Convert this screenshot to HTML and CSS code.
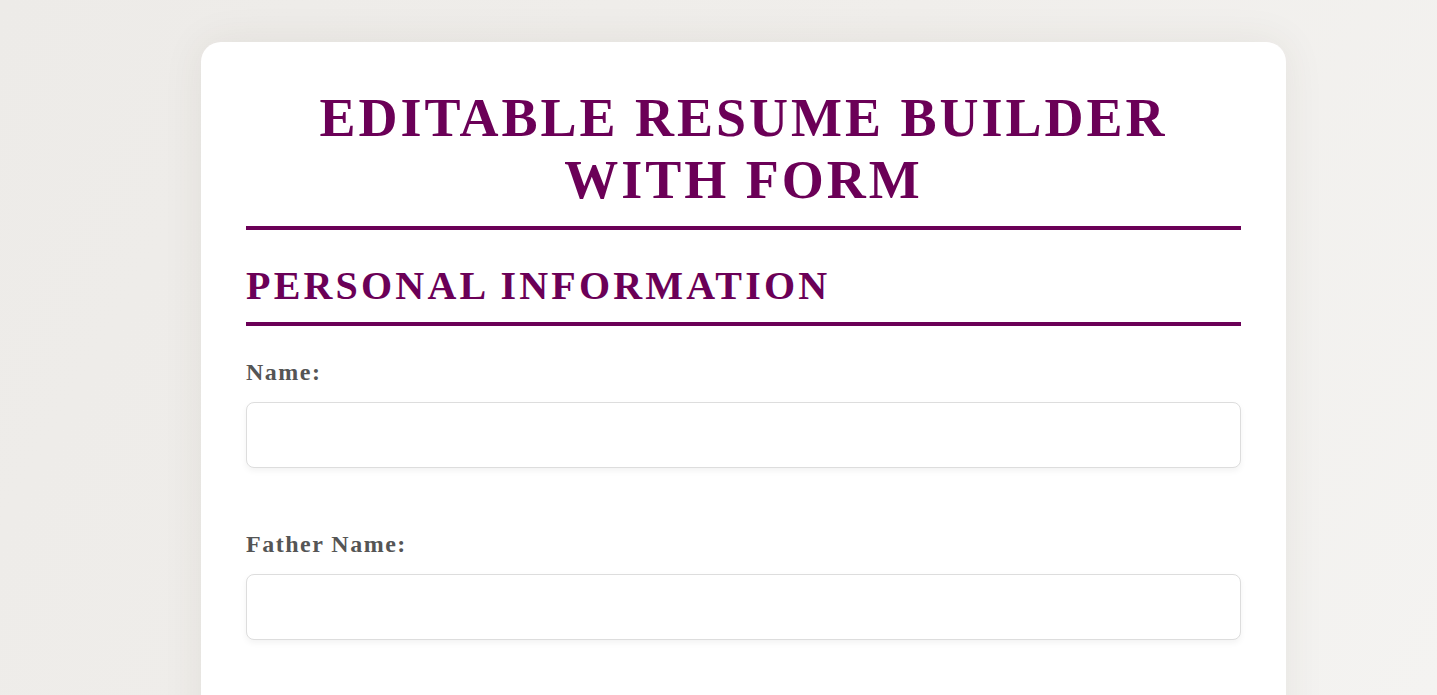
FILE: index.html
```html
<!DOCTYPE html>
<html lang="en">
<head>
<meta charset="utf-8">
<title>Editable Resume Builder with Form</title>
<link rel="stylesheet" href="styles.css">
</head>
<body>
<main class="page">
  <section class="card">
    <h1 class="title">Editable Resume Builder with Form</h1>
    <h2 class="section-title">Personal Information</h2>
    <div class="field">
      <label class="label" for="name">Name:</label>
      <input class="input" id="name" type="text">
    </div>
    <div class="field">
      <label class="label" for="father">Father Name:</label>
      <input class="input" id="father" type="text">
    </div>
    <div class="field">
      <label class="label" for="email">Email:</label>
      <input class="input" id="email" type="email">
    </div>
  </section>
</main>
</body>
</html>
```
FILE: styles.css
```css
* { box-sizing: border-box; }
html, body { height: 100%; }
body {
  margin: 0;
  font-family: "Liberation Serif", "Times New Roman", serif;
  background: linear-gradient(120deg, #edebe8 0%, #f0eeeb 50%, #f4f3f1 100%);
  overflow: hidden;
}
.page {
  display: flex;
  justify-content: center;
  padding: 42px 0 0 50px;
}
.card {
  width: 1085px;
  background: #ffffff;
  border-radius: 20px;
  padding: 45px 45px 40px;
  box-shadow: 0 0 40px rgba(80, 60, 40, 0.08);
}
.title {
  margin: 0;
  text-align: center;
  font-size: 54px;
  font-weight: bold;
  letter-spacing: 3px;
  text-transform: uppercase;
  color: #6b0057;
  padding-bottom: 15px;
  border-bottom: 4px solid #6b0057;
}
.section-title {
  margin: 32px 0 0;
  font-size: 40px;
  font-weight: bold;
  letter-spacing: 3.2px;
  text-transform: uppercase;
  color: #6b0057;
  padding-bottom: 13px;
  border-bottom: 4px solid #6b0057;
}
.field {
  display: flex;
  flex-direction: column;
  margin-top: 33px;
}
.field + .field { margin-top: 63px; }
.label {
  font-size: 24px;
  font-weight: bold;
  letter-spacing: 1.5px;
  color: #555555;
  margin-bottom: 16px;
}
.input {
  height: 66px;
  width: 100%;
  border: 1px solid #dddddd;
  border-radius: 8px;
  background: #ffffff;
  box-shadow: 0 3px 6px rgba(0, 0, 0, 0.05);
  font-family: inherit;
  font-size: 18px;
  padding: 0 15px;
  outline: none;
}
```
